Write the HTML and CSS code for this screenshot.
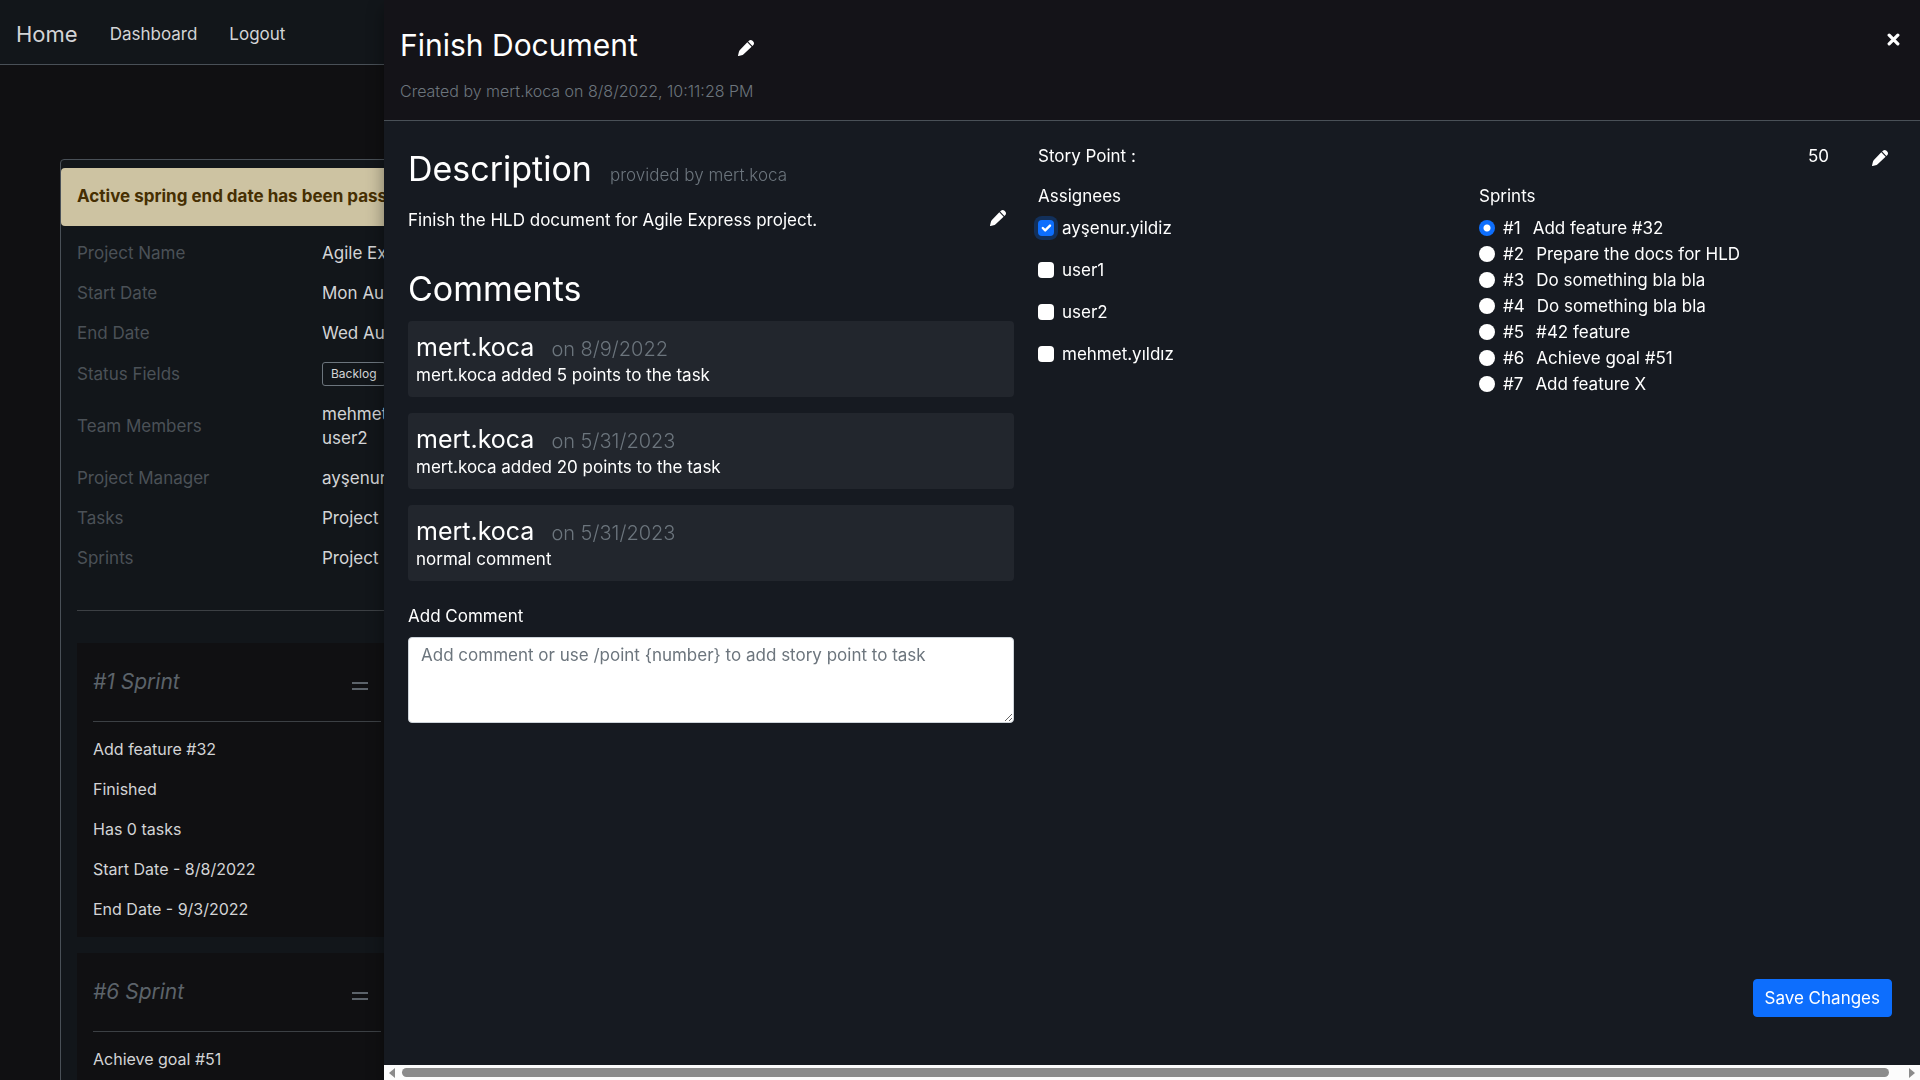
FILE: index.html
```html
<!DOCTYPE html>
<html lang="en">
<head>
<meta charset="utf-8">
<meta name="viewport" content="width=device-width, initial-scale=1">
<title>Finish Document</title>
<link rel="stylesheet" href="styles.css">
</head>
<body>
<svg class="defs" aria-hidden="true">
  <symbol id="pencil" viewBox="0 0 16 16"><path d="M10.1 1.5 11.2.5Q12.9-.6 14.5.8L15.2 1.5Q16.7 3.1 15.4 4.9L14.4 5.9ZM9.3 2.3 13.6 6.7 5.600 14.200Q4.6 15 3.6 15.200L.6 15.9Q-.2 16.1.1 15.3L.8 12.2Q1.1 10.900 1.900 10Z"/></symbol>
  <symbol id="equals" viewBox="0 0 16 8"><path d="M0 1h16M0 7h16" stroke="currentColor" stroke-width="2"/></symbol>
</svg>
<nav class="navbar">
  <a class="brand" href="#">Home</a>
  <a href="#">Dashboard</a>
  <a href="#">Logout</a>
</nav>
<main class="project">
  <div class="alert" role="alert">Active spring end date has been passed</div>
  <div class="project-body">
    <table class="info">
      <tbody>
        <tr><th scope="row">Project Name</th><td>Agile Express</td></tr>
        <tr><th scope="row">Start Date</th><td>Mon Aug 8</td></tr>
        <tr><th scope="row">End Date</th><td>Wed Aug 31</td></tr>
        <tr><th scope="row">Status Fields</th><td><span class="tag">Backlog</span></td></tr>
        <tr><th scope="row">Team Members</th><td>mehmet<br>user2</td></tr>
        <tr><th scope="row">Project Manager</th><td>ayşenur</td></tr>
        <tr><th scope="row">Tasks</th><td>Project</td></tr>
        <tr><th scope="row">Sprints</th><td>Project</td></tr>
      </tbody>
    </table>
    <hr>
    <div class="sprint-list">
      <section class="sprint">
        <header><h2>#1 Sprint</h2><svg class="handle"><use href="#equals"/></svg></header>
        <p>Add feature #32</p>
        <p>Finished</p>
        <p>Has 0 tasks</p>
        <p>Start Date - 8/8/2022</p>
        <p>End Date - 9/3/2022</p>
      </section>
      <section class="sprint">
        <header><h2>#6 Sprint</h2><svg class="handle"><use href="#equals"/></svg></header>
        <p>Achieve goal #51</p>
      </section>
    </div>
  </div>
</main>

<aside class="drawer" role="dialog" aria-labelledby="task-title">
  <header class="drawer-head">
    <div class="title-row">
      <h1 id="task-title">Finish Document</h1>
      <button class="icon-btn" type="button" aria-label="Edit title"><svg><use href="#pencil"/></svg></button>
    </div>
    <p class="muted">Created by mert.koca on 8/8/2022, 10:11:28 PM</p>
    <button class="icon-btn close" type="button" aria-label="Close"><svg viewBox="0 0 12 12"><path d="M2 2l8 8M10 2l-8 8" stroke="currentColor" stroke-width="3" stroke-linecap="round"/></svg></button>
  </header>
  <div class="drawer-body">
    <div class="details">
      <div class="heading">
        <h2>Description</h2>
        <span class="muted">provided by mert.koca</span>
      </div>
      <div class="description">
        <p>Finish the HLD document for Agile Express project.</p>
        <button class="icon-btn" type="button" aria-label="Edit description"><svg><use href="#pencil"/></svg></button>
      </div>
      <h2>Comments</h2>
      <div class="comments">
        <article class="comment">
          <header><h3>mert.koca</h3><span>on 8/9/2022</span></header>
          <p>mert.koca added 5 points to the task</p>
        </article>
        <article class="comment">
          <header><h3>mert.koca</h3><span>on 5/31/2023</span></header>
          <p>mert.koca added 20 points to the task</p>
        </article>
        <article class="comment">
          <header><h3>mert.koca</h3><span>on 5/31/2023</span></header>
          <p>normal comment</p>
        </article>
      </div>
      <label class="comment-label" for="new-comment">Add Comment</label>
      <textarea id="new-comment" placeholder="Add comment or use /point {number} to add story point to task"></textarea>
    </div>
    <div class="settings">
      <div class="points">
        <span>Story Point :</span>
        <span class="value">50</span>
        <button class="icon-btn" type="button" aria-label="Edit story point"><svg><use href="#pencil"/></svg></button>
      </div>
      <div class="choices">
        <fieldset class="assignees">
          <legend>Assignees</legend>
          <label><input class="focused" type="checkbox" checked>ayşenur.yildiz</label>
          <label><input type="checkbox">user1</label>
          <label><input type="checkbox">user2</label>
          <label><input type="checkbox">mehmet.yıldız</label>
        </fieldset>
        <fieldset class="sprints">
          <legend>Sprints</legend>
          <label><input type="radio" name="sprint" checked>#1<span>Add feature #32</span></label>
          <label><input type="radio" name="sprint">#2<span>Prepare the docs for HLD</span></label>
          <label><input type="radio" name="sprint">#3<span>Do something bla bla</span></label>
          <label><input type="radio" name="sprint">#4<span>Do something bla bla</span></label>
          <label><input type="radio" name="sprint">#5<span>#42 feature</span></label>
          <label><input type="radio" name="sprint">#6<span>Achieve goal #51</span></label>
          <label><input type="radio" name="sprint">#7<span>Add feature X</span></label>
        </fieldset>
      </div>
      <button class="save" type="button">Save Changes</button>
    </div>
  </div>
  <div class="scrollbar" aria-hidden="true">
    <svg viewBox="0 0 6 10"><path d="M6 0v10L0 5z"/></svg>
    <div class="thumb"></div>
    <svg viewBox="0 0 6 10"><path d="M0 0v10l6-5z"/></svg>
  </div>
</aside>
</body>
</html>
```
FILE: styles.css
```css
* { box-sizing: border-box; }
body {
  margin: 0;
  height: 100vh;
  overflow: hidden;
  background: #101012;
  color: #d3d4d6;
  font: 400 17px/24px Inter, "Liberation Sans", sans-serif;
}
h1, h2, h3, p { margin: 0; font-weight: 400; }
a { color: inherit; text-decoration: none; }
button, textarea { font: inherit; }
.defs { display: none; }

.navbar {
  display: flex;
  align-items: center;
  gap: 32px;
  height: 65px;
  padding: 4px 16px 0;
  background: #12161a;
  border-bottom: 1px solid #495057;
}
.brand { font-size: 22px; }

.project {
  margin: 94px 60px 0;
  padding-top: 8px;
  background: #12161a;
  border: 1px solid #495057;
  border-radius: 4px;
}
.alert {
  padding: 16px 16px 18px;
  background: #cdc3a2;
  border-radius: 4px;
  color: #462f02;
  font-weight: 700;
}
.project-body { padding: 7px 16px; }
.info { width: 100%; border-collapse: collapse; }
.info th {
  width: 245px;
  padding: 8px 0;
  color: #4b5157;
  font-weight: 400;
  text-align: left;
}
.info td { padding: 8px 0; }
.tag {
  display: inline-block;
  padding: 0 8px;
  border: 1px solid #6c757d;
  border-radius: 3px;
  font-size: 12px;
  line-height: 22px;
  vertical-align: middle;
}
hr { margin: 32px 0; border: 0; border-top: 1px solid #3c4044; }
.sprint-list { display: flex; flex-direction: column; align-items: flex-start; gap: 16px; }
.sprint { width: 320px; padding: 0 16px 16px; background: #101012; }
.sprint header {
  display: flex;
  align-items: center;
  justify-content: space-between;
  height: 79px;
  margin-bottom: 15px;
  padding-right: 13px;
  border-bottom: 1px solid #3c4044;
  color: #5c636a;
}
.sprint h2 { font-size: 21px; font-style: italic; }
.handle { width: 16px; height: 8px; margin-top: 8px; }
.sprint p { font-size: 16px; }
.sprint p + p { margin-top: 16px; }

.drawer {
  position: fixed;
  inset: 0 0 0 auto;
  display: flex;
  flex-direction: column;
  width: 80%;
  background: #161a21;
  box-shadow: 0 8px 16px rgba(0, 0, 0, .4);
  color: #fff;
}
.muted { color: #6c757d; font-weight: 300; }
.icon-btn { display: flex; padding: 0; border: 0; background: none; color: #fff; }
.icon-btn svg { width: 16px; height: 16px; fill: currentColor; }
.drawer-head {
  position: relative;
  height: 121px;
  padding: 28px 16px 0;
  background: #141318;
  border-bottom: 1px solid #495057;
}
.title-row { display: flex; align-items: center; justify-content: space-between; max-width: 354px; }
.title-row .icon-btn { margin-top: 6px; }
h1 { font-size: 30px; line-height: 34px; }
.drawer-head .muted { margin-top: 17px; font-size: 16px; }
.drawer-head .close { position: absolute; top: 33px; right: 20px; }
.close svg { width: 13px; height: 13px; }

.drawer-body { flex: 1; display: grid; grid-template-columns: 606px 1fr; gap: 24px; padding: 23px 24px 48px; }
.heading { display: flex; align-items: baseline; gap: 18px; }
.details h2 { font-size: 34px; line-height: 50px; }
.description { display: flex; justify-content: space-between; margin: 14px 0 32px; padding-right: 8px; }
.description .icon-btn { margin-top: 2px; }
.comments { display: flex; flex-direction: column; gap: 16px; margin-top: 7px; }
.comment {
  height: 76px;
  padding: 10px 8px 0;
  background: #22262d;
  border-radius: 4px;
}
.comment header { display: flex; align-items: baseline; gap: 17px; }
.comment h3 { font-size: 25px; line-height: 32px; }
.comment span { color: #6c757d; font-size: 20px; font-weight: 300; }
.comment-label { display: block; margin: 23px 0 9px; }
textarea {
  display: block;
  width: 100%;
  height: 86px;
  padding: 5px 12px;
  border: 1px solid #ced4da;
  border-radius: 4px;
  background: #fff;
}
textarea::placeholder { color: #6c757d; opacity: 1; }

.settings { display: flex; flex-direction: column; }
.points { display: flex; align-items: center; padding-right: 8px; }
.points .icon-btn { margin-top: 4px; }
.points .value { margin-left: auto; margin-right: 43px; }
.choices { display: grid; grid-template-columns: 1fr 417px; margin-top: 16px; }
fieldset { margin: 0; padding: 0; border: 0; }
legend { margin-bottom: 7px; padding: 0; }
fieldset label { display: flex; align-items: center; gap: 8px; height: 26px; }
.assignees label { margin-top: 16px; }
.assignees legend + label { margin-top: 0; }
.sprints span { margin-left: 4px; }
input {
  appearance: none;
  width: 16px;
  height: 16px;
  margin: 0;
  border-radius: 4px;
  background: #fff center / 16px no-repeat;
}
input[type="radio"] { border-radius: 50%; }
input[type="checkbox"]:checked {
  background-color: #0d6efd;
  background-image: url("data:image/svg+xml,%3Csvg xmlns='http://www.w3.org/2000/svg' viewBox='0 0 20 20'%3E%3Cpath fill='none' stroke='%23fff' stroke-linecap='round' stroke-linejoin='round' stroke-width='3' d='m6 10 3 3 6-6'/%3E%3C/svg%3E");
}
input.focused { box-shadow: 0 0 0 4px #12305b; }
input[type="radio"]:checked { background: radial-gradient(circle, #fff 3px, #0d6efd 4px); }
.save {
  align-self: flex-end;
  margin-top: auto;
  margin-right: 4px;
  padding: 6px 11px;
  border: 1px solid #0d6efd;
  border-radius: 4px;
  background: #0d6efd;
  color: #fff;
}
.scrollbar { display: flex; align-items: center; gap: 7px; height: 15px; padding: 0 5px; background: #fcfcfc; }
.scrollbar svg { width: 6px; height: 10px; fill: #8b8b8b; }
.thumb { flex: 1; height: 9px; margin-right: 13px; border-radius: 5px; background: #8b8b8b; }
```
